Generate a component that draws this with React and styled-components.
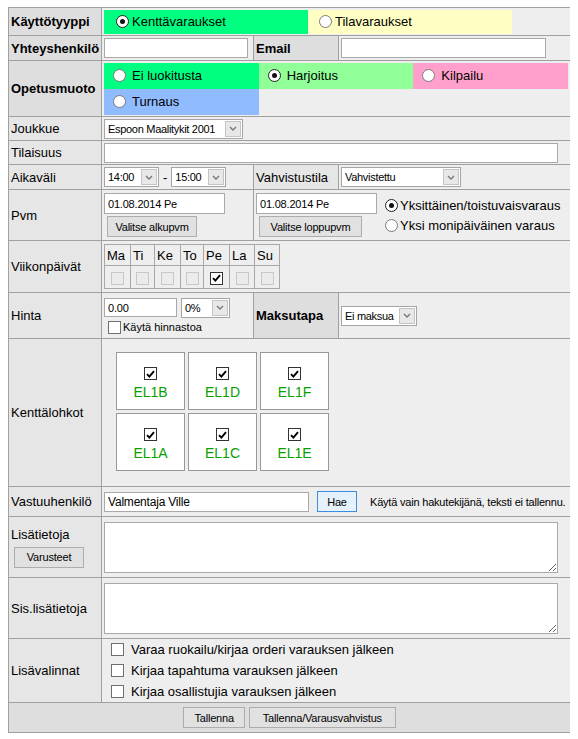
import React from "react";
import styled, { createGlobalStyle } from "styled-components";

const GlobalStyle = createGlobalStyle`
  body {
    margin: 7px 8px;
    background: #fff;
    font-family: "Liberation Sans", Arial, sans-serif;
    font-size: 13px;
    color: #000;
  }
`;

const Form = styled.table`
  width: 562px;
  table-layout: fixed;
  border-collapse: collapse;
  background: #eeeeee;
  border: 1px solid #a0a0a0;
`;

const Row = styled.tr`
  height: ${(p) => p.$h}px;
`;

const Label = styled.td`
  border: 1px solid #a0a0a0;
  background: ${(p) => (p.$bold ? "#dedede" : "#e6e6e6")};
  font-weight: ${(p) => (p.$bold ? "bold" : "normal")};
  padding: 0 2px;
  vertical-align: middle;
  white-space: nowrap;
`;

const Cell = styled.td`
  border: 1px solid #a0a0a0;
  padding: ${(p) => p.$pad || "1px 2px"};
  vertical-align: middle;
`;

const Footer = styled.td`
  border: 1px solid #a0a0a0;
  background: #dedede;
  text-align: center;
  vertical-align: middle;
  padding: 0;
`;

const Line = styled.div`
  display: flex;
  align-items: center;
  gap: ${(p) => p.$gap || 0}px;
`;

const Stack = styled.div`
  display: flex;
  flex-direction: column;
  align-items: flex-start;
  gap: ${(p) => p.$gap || 0}px;
`;

const Swatch = styled.div`
  display: flex;
  align-items: center;
  gap: ${(p) => p.$gap}px;
  width: ${(p) => p.$w || "auto"};
  height: ${(p) => p.$h}px;
  padding-left: ${(p) => p.$pl}px;
  box-sizing: border-box;
  background: ${(p) => p.$bg};
`;

const Palette = styled.div`
  display: grid;
  grid-template-columns: repeat(3, 1fr);
`;

const RadioDot = styled.span`
  width: 13px;
  height: 13px;
  flex-shrink: 0;
  box-sizing: border-box;
  border-radius: 50%;
  border: 1px solid ${(p) => (p.$checked ? "#222" : "#7a7a7a")};
  background: #fff;
  display: inline-flex;
  align-items: center;
  justify-content: center;
  &::after {
    content: "";
    width: 5px;
    height: 5px;
    border-radius: 50%;
    background: #111;
    display: ${(p) => (p.$checked ? "block" : "none")};
  }
`;

const Box = styled.span`
  width: 13px;
  height: 13px;
  flex-shrink: 0;
  box-sizing: border-box;
  border: 1px solid ${(p) => (p.$disabled ? "#c8c8c8" : p.$checked ? "#333" : "#6f6f6f")};
  background: ${(p) => (p.$disabled ? "#ebebeb" : "#fff")};
  display: inline-flex;
  align-items: center;
  justify-content: center;
`;

function Check({ checked, disabled }) {
  return (
    <Box $checked={checked} $disabled={disabled}>
      {checked && (
        <svg width="9" height="8" viewBox="0 0 9 8">
          <path d="M1 4.2 L3.4 6.6 L8 1.2" stroke="#000" strokeWidth="1.9" fill="none" />
        </svg>
      )}
    </Box>
  );
}

const TextInput = styled.input`
  width: ${(p) => p.$w}px;
  height: ${(p) => p.$h || 20}px;
  box-sizing: border-box;
  border: 1px solid #a9a9a9;
  background: #fff;
  font-family: "Liberation Sans", Arial, sans-serif;
  font-size: ${(p) => p.$fs || 11}px;
  letter-spacing: -0.2px;
  padding: 0 3px;
  margin: 0;
  outline: none;
`;

const Area = styled.textarea`
  display: block;
  width: 454px;
  height: 51px;
  box-sizing: border-box;
  border: 1px solid #a9a9a9;
  background: #fff;
  margin: 0;
  resize: both;
`;

const Btn = styled.button`
  height: 21px;
  box-sizing: border-box;
  padding: 0 ${(p) => p.$px || 7}px;
  margin: 0;
  font-family: "Liberation Sans", Arial, sans-serif;
  font-size: 11px;
  letter-spacing: -0.2px;
  color: #000;
  border: 1px solid ${(p) => (p.$focus ? "#3c8ce0" : "#adadad")};
  background: ${(p) => (p.$focus ? "#e5f1fb" : "#e1e1e1")};
  border-radius: 0;
  width: ${(p) => (p.$w ? p.$w + "px" : "auto")};
`;

const SelectBox = styled.span`
  display: inline-flex;
  align-items: stretch;
  width: ${(p) => p.$w}px;
  height: 20px;
  box-sizing: border-box;
  border: 1px solid #a5a5a5;
  background: #fff;
  font-size: 11px;
  letter-spacing: -0.3px;
  vertical-align: middle;
`;

const SelectText = styled.span`
  flex: 1;
  padding-left: 3px;
  display: flex;
  align-items: center;
  white-space: nowrap;
  overflow: hidden;
`;

const SelectArrow = styled.span`
  width: 14px;
  margin: 1px;
  border: 1px solid #c4c4c4;
  background: #e8e8e8;
  display: flex;
  align-items: center;
  justify-content: center;
`;

function Select({ w, children }) {
  return (
    <SelectBox $w={w}>
      <SelectText>{children}</SelectText>
      <SelectArrow>
        <svg width="8" height="5" viewBox="0 0 8 5">
          <path d="M1 1 L4 4 L7 1" stroke="#777" strokeWidth="1.4" fill="none" />
        </svg>
      </SelectArrow>
    </SelectBox>
  );
}

const Days = styled.table`
  border-collapse: collapse;
  border: 1px solid #a8a8a8;
`;

const DayHead = styled.td`
  border: 1px solid #a8a8a8;
  width: ${(p) => p.$w}px;
  height: 21px;
  padding: 0 2px;
  box-sizing: border-box;
  font-size: 13px;
`;

const DayBox = styled.td`
  border: 1px solid #a8a8a8;
  height: 22px;
  padding: 0;
  text-align: center;
  vertical-align: middle;
  & > span {
    vertical-align: middle;
  }
`;

const Fields = styled.div`
  display: grid;
  grid-template-columns: repeat(3, 69px);
  grid-auto-rows: 58px;
  gap: 3px;
  padding: 13px 0 15px 14px;
`;

const Field = styled.div`
  border: 1px solid #999;
  background: #fff;
  display: flex;
  flex-direction: column;
  align-items: center;
  padding-top: 14px;
  gap: 4px;
  box-sizing: border-box;
  font-size: 14px;
  color: #08a000;
`;

const Hint = styled.span`
  font-size: 11px;
  letter-spacing: -0.2px;
  margin-left: 13px;
  white-space: nowrap;
`;

const Small = styled.span`
  font-size: 11px;
`;

const Options = styled.div`
  display: flex;
  flex-direction: column;
  gap: 6px;
  padding-left: 7px;
`;

const days = [
  ["Ma", 26],
  ["Ti", 24],
  ["Ke", 26],
  ["To", 23],
  ["Pe", 26],
  ["La", 25],
  ["Su", 25],
];

const fields = ["EL1B", "EL1D", "EL1F", "EL1A", "EL1C", "EL1E"];

export default function App() {
  return (
    <>
      <GlobalStyle />
      <Form>
        <colgroup>
          <col width="93" />
          <col width="152" />
          <col width="85" />
          <col width="232" />
        </colgroup>
        <tbody>
          <Row $h={28}>
            <Label $bold>Käyttötyyppi</Label>
            <Cell colSpan={3}>
              <Line>
                <Swatch $bg="#00ff80" $w="204px" $h={24} $pl={12} $gap={3}>
                  <RadioDot $checked />
                  Kenttävaraukset
                </Swatch>
                <Swatch $bg="#ffffc4" $w="204px" $h={24} $pl={11} $gap={3}>
                  <RadioDot />
                  Tilavaraukset
                </Swatch>
              </Line>
            </Cell>
          </Row>
          <Row $h={25}>
            <Label $bold>Yhteyshenkilö</Label>
            <Cell>
              <TextInput $w={144} defaultValue="" />
            </Cell>
            <Label $bold>Email</Label>
            <Cell>
              <TextInput $w={205} defaultValue="" />
            </Cell>
          </Row>
          <Row $h={56}>
            <Label $bold>Opetusmuoto</Label>
            <Cell colSpan={3}>
              <Palette>
                <Swatch $bg="#00ff80" $h={26} $pl={9} $gap={6}>
                  <RadioDot />
                  Ei luokitusta
                </Swatch>
                <Swatch $bg="#90ff98" $h={26} $pl={9} $gap={6}>
                  <RadioDot $checked />
                  Harjoitus
                </Swatch>
                <Swatch $bg="#ffa0cc" $h={26} $pl={9} $gap={6}>
                  <RadioDot />
                  Kilpailu
                </Swatch>
                <Swatch $bg="#90bbff" $h={26} $pl={9} $gap={6}>
                  <RadioDot />
                  Turnaus
                </Swatch>
              </Palette>
            </Cell>
          </Row>
          <Row $h={24}>
            <Label>Joukkue</Label>
            <Cell colSpan={3}>
              <Select w={139}>Espoon Maalitykit 2001</Select>
            </Cell>
          </Row>
          <Row $h={24}>
            <Label>Tilaisuus</Label>
            <Cell colSpan={3}>
              <TextInput $w={454} defaultValue="" />
            </Cell>
          </Row>
          <Row $h={25}>
            <Label>Aikaväli</Label>
            <Cell>
              <Line $gap={4}>
                <Select w={55}>14:00</Select>
                <span>-</span>
                <Select w={55}>15:00</Select>
              </Line>
            </Cell>
            <Label>Vahvistustila</Label>
            <Cell>
              <Select w={120}>Vahvistettu</Select>
            </Cell>
          </Row>
          <Row $h={51}>
            <Label>Pvm</Label>
            <Cell>
              <Stack $gap={2}>
                <TextInput $w={121} $h={21} defaultValue="01.08.2014 Pe" />
                <Btn $w={90} style={{ marginLeft: 3 }}>Valitse alkupvm</Btn>
              </Stack>
            </Cell>
            <Cell colSpan={2}>
              <Line $gap={8}>
                <Stack $gap={2}>
                  <TextInput $w={121} $h={21} defaultValue="01.08.2014 Pe" />
                  <Btn $w={103} style={{ marginLeft: 3 }}>Valitse loppupvm</Btn>
                </Stack>
                <Stack $gap={5}>
                  <Line $gap={2}>
                    <RadioDot $checked />
                    Yksittäinen/toistuvaisvaraus
                  </Line>
                  <Line $gap={2}>
                    <RadioDot />
                    Yksi monipäiväinen varaus
                  </Line>
                </Stack>
              </Line>
            </Cell>
          </Row>
          <Row $h={52}>
            <Label>Viikonpäivät</Label>
            <Cell colSpan={3}>
              <Days>
                <tbody>
                  <tr>
                    {days.map(([d, w]) => (
                      <DayHead key={d} $w={w}>
                        {d}
                      </DayHead>
                    ))}
                  </tr>
                  <tr>
                    {days.map(([d]) => (
                      <DayBox key={d}>
                        {d === "Pe" ? <Check checked /> : <Check disabled />}
                      </DayBox>
                    ))}
                  </tr>
                </tbody>
              </Days>
            </Cell>
          </Row>
          <Row $h={46}>
            <Label>Hinta</Label>
            <Cell>
              <Stack $gap={3}>
                <Line $gap={4}>
                  <TextInput $w={73} $h={19} defaultValue="0.00" />
                  <Select w={49}>0%</Select>
                </Line>
                <Line $gap={2} style={{ paddingLeft: 4 }}>
                  <Check />
                  <Small>Käytä hinnastoa</Small>
                </Line>
              </Stack>
            </Cell>
            <Label $bold>Maksutapa</Label>
            <Cell>
              <Select w={76}>Ei maksua</Select>
            </Cell>
          </Row>
          <Row $h={148}>
            <Label>Kenttälohkot</Label>
            <Cell colSpan={3} $pad="0">
              <Fields>
                {fields.map((f) => (
                  <Field key={f}>
                    <Check checked />
                    {f}
                  </Field>
                ))}
              </Fields>
            </Cell>
          </Row>
          <Row $h={30}>
            <Label>Vastuuhenkilö</Label>
            <Cell colSpan={3}>
              <Line>
                <TextInput $w={205} $fs={12} defaultValue="Valmentaja Ville" />
                <Btn $focus $w={40} style={{ marginLeft: 8 }}>
                  Hae
                </Btn>
                <Hint>Käytä vain hakutekijänä, teksti ei tallennu.</Hint>
              </Line>
            </Cell>
          </Row>
          <Row $h={61}>
            <Label>
              <Stack $gap={5}>
                Lisätietoja
                <Btn $w={70} style={{ marginLeft: 3 }}>Varusteet</Btn>
              </Stack>
            </Label>
            <Cell colSpan={3}>
              <Area />
            </Cell>
          </Row>
          <Row $h={61}>
            <Label>Sis.lisätietoja</Label>
            <Cell colSpan={3}>
              <Area />
            </Cell>
          </Row>
          <Row $h={64}>
            <Label>Lisävalinnat</Label>
            <Cell colSpan={3}>
              <Options>
                <Line $gap={7}>
                  <Check />
                  Varaa ruokailu/kirjaa orderi varauksen jälkeen
                </Line>
                <Line $gap={7}>
                  <Check />
                  Kirjaa tapahtuma varauksen jälkeen
                </Line>
                <Line $gap={7}>
                  <Check />
                  Kirjaa osallistujia varauksen jälkeen
                </Line>
              </Options>
            </Cell>
          </Row>
          <Row $h={30}>
            <Footer colSpan={4}>
              <Btn $w={62}>Tallenna</Btn> <Btn $w={147}>Tallenna/Varausvahvistus</Btn>
            </Footer>
          </Row>
        </tbody>
      </Form>
    </>
  );
}
